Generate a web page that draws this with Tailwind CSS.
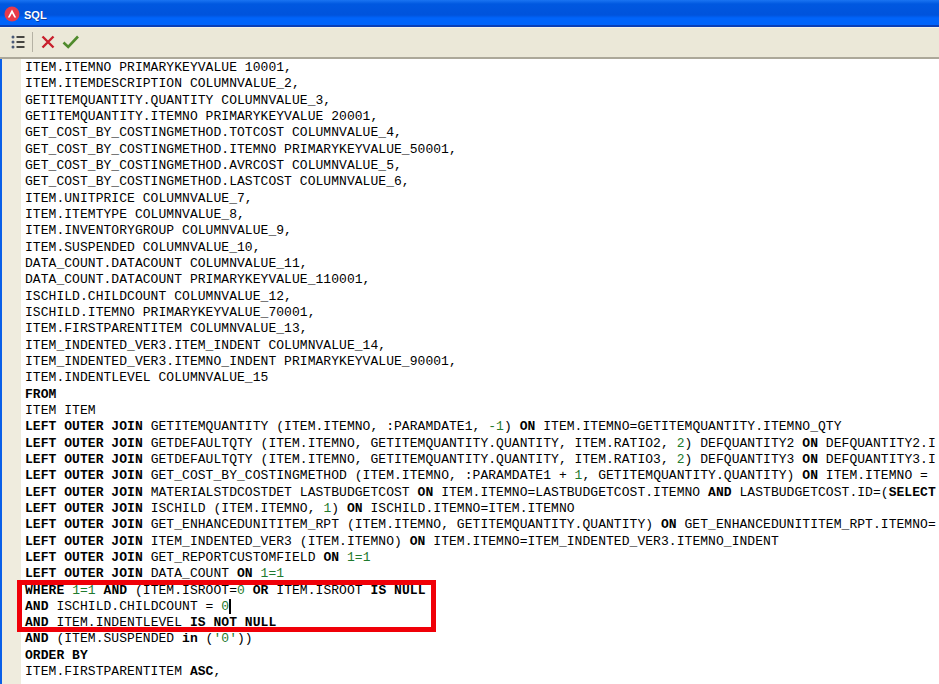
<!DOCTYPE html>
<html>
<head>
<meta charset="utf-8">
<script src="https://cdn.jsdelivr.net/npm/@tailwindcss/browser@4"></script>
</head>
<body class="bg-white">
<div class="w-[939px] h-[684px] overflow-hidden flex flex-col bg-white">
  <header class="h-[27px] shrink-0 flex items-center gap-[4px] pl-[4px] pt-[3px] border-b-2 border-[#0a3fb5] bg-[linear-gradient(180deg,#1a74f2_0px,#0058e0_4px,#0053dc_15px,#0064fa_18px,#0064fa_100%)]">
    <svg width="16" height="16" viewBox="0 0 16 16" class="shrink-0">
      <circle cx="8" cy="8" r="7.5" fill="#e83a4a"/>
      <path d="M3.8 11.6 8 3.4l4.2 8.2-1.9 0L8 7.2l-2.3 4.4z" fill="#fff"/>
    </svg>
    <span class="mt-[2px] font-['Liberation_Sans',sans-serif] font-bold text-[11px] text-white [text-shadow:1px_1px_0_#0a3a9e]">SQL</span>
  </header>
  <div class="h-[32px] shrink-0 flex items-center pl-[11px] pb-[1px] border-t border-[#f3f2ea] border-b-2 border-b-[#aca899] bg-[#ebe8d8]">
    <svg width="14" height="14" viewBox="0 0 14 14" class="shrink-0">
      <circle cx="2" cy="2" r="1.5" fill="#4a5a78"/>
      <circle cx="2" cy="7" r="1.5" fill="#4a5a78"/>
      <circle cx="2" cy="12" r="1.5" fill="#4a5a78"/>
      <path d="M5.5 2H13.5M5.5 7H13.5M5.5 12H13.5" stroke="#111" stroke-width="1.3" fill="none"/>
    </svg>
    <div class="w-px h-[20px] bg-[#b5b2a4] ml-[7px] mr-[8px]"></div>
    <svg width="14" height="14" viewBox="0 0 14 14" class="shrink-0">
      <path d="M1.5 1.5 12.5 12.5M12.5 1.5 1.5 12.5" stroke="#c8202c" stroke-width="2.4" fill="none"/>
    </svg>
    <svg width="18" height="14" viewBox="0 0 18 14" class="shrink-0 ml-[7px]">
      <path d="M1.5 7.5 6.2 12 16 1.5" stroke="#4f8a2c" stroke-width="2.6" fill="none"/>
    </svg>
  </div>
  <main class="relative flex-1 flex min-h-0 overflow-hidden">
    <div class="w-[2px] shrink-0 bg-[#0a5fe8]"></div>
    <div class="w-[19px] shrink-0 bg-[#efecde]"></div>
    <pre class="pl-[4px] pt-[1px] m-0 font-['Liberation_Mono',monospace] text-[13px] leading-[16.33px] tracking-[0.05px] text-black whitespace-pre">ITEM.ITEMNO PRIMARYKEYVALUE 10001,
ITEM.ITEMDESCRIPTION COLUMNVALUE_2,
GETITEMQUANTITY.QUANTITY COLUMNVALUE_3,
GETITEMQUANTITY.ITEMNO PRIMARYKEYVALUE 20001,
GET_COST_BY_COSTINGMETHOD.TOTCOST COLUMNVALUE_4,
GET_COST_BY_COSTINGMETHOD.ITEMNO PRIMARYKEYVALUE_50001,
GET_COST_BY_COSTINGMETHOD.AVRCOST COLUMNVALUE_5,
GET_COST_BY_COSTINGMETHOD.LASTCOST COLUMNVALUE_6,
ITEM.UNITPRICE COLUMNVALUE_7,
ITEM.ITEMTYPE COLUMNVALUE_8,
ITEM.INVENTORYGROUP COLUMNVALUE_9,
ITEM.SUSPENDED COLUMNVALUE_10,
DATA_COUNT.DATACOUNT COLUMNVALUE_11,
DATA_COUNT.DATACOUNT PRIMARYKEYVALUE_110001,
ISCHILD.CHILDCOUNT COLUMNVALUE_12,
ISCHILD.ITEMNO PRIMARYKEYVALUE_70001,
ITEM.FIRSTPARENTITEM COLUMNVALUE_13,
ITEM_INDENTED_VER3.ITEM_INDENT COLUMNVALUE_14,
ITEM_INDENTED_VER3.ITEMNO_INDENT PRIMARYKEYVALUE_90001,
ITEM.INDENTLEVEL COLUMNVALUE_15
<b>FROM</b>
ITEM ITEM
<b>LEFT OUTER JOIN</b> GETITEMQUANTITY (ITEM.ITEMNO, :PARAMDATE1, <span class="text-[#1f7a2e]">-1</span>) <b>ON</b> ITEM.ITEMNO=GETITEMQUANTITY.ITEMNO_QTY
<b>LEFT OUTER JOIN</b> GETDEFAULTQTY (ITEM.ITEMNO, GETITEMQUANTITY.QUANTITY, ITEM.RATIO2, <span class="text-[#1f7a2e]">2</span>) DEFQUANTITY2 <b>ON</b> DEFQUANTITY2.I
<b>LEFT OUTER JOIN</b> GETDEFAULTQTY (ITEM.ITEMNO, GETITEMQUANTITY.QUANTITY, ITEM.RATIO3, <span class="text-[#1f7a2e]">2</span>) DEFQUANTITY3 <b>ON</b> DEFQUANTITY3.I
<b>LEFT OUTER JOIN</b> GET_COST_BY_COSTINGMETHOD (ITEM.ITEMNO, :PARAMDATE1 + <span class="text-[#1f7a2e]">1</span>, GETITEMQUANTITY.QUANTITY) <b>ON</b> ITEM.ITEMNO =
<b>LEFT OUTER JOIN</b> MATERIALSTDCOSTDET LASTBUDGETCOST <b>ON</b> ITEM.ITEMNO=LASTBUDGETCOST.ITEMNO <b>AND</b> LASTBUDGETCOST.ID=(<b>SELECT</b>
<b>LEFT OUTER JOIN</b> ISCHILD (ITEM.ITEMNO, <span class="text-[#1f7a2e]">1</span>) <b>ON</b> ISCHILD.ITEMNO=ITEM.ITEMNO
<b>LEFT OUTER JOIN</b> GET_ENHANCEDUNITITEM_RPT (ITEM.ITEMNO, GETITEMQUANTITY.QUANTITY) <b>ON</b> GET_ENHANCEDUNITITEM_RPT.ITEMNO=
<b>LEFT OUTER JOIN</b> ITEM_INDENTED_VER3 (ITEM.ITEMNO) <b>ON</b> ITEM.ITEMNO=ITEM_INDENTED_VER3.ITEMNO_INDENT
<b>LEFT OUTER JOIN</b> GET_REPORTCUSTOMFIELD <b>ON</b> <span class="text-[#1f7a2e]">1=1</span>
<b>LEFT OUTER JOIN</b> DATA_COUNT <b>ON</b> <span class="text-[#1f7a2e]">1=1</span>
<b>WHERE</b> <span class="text-[#1f7a2e]">1=1</span> <b>AND</b> (ITEM.ISROOT=<span class="text-[#1f7a2e]">0</span> <b>OR</b> ITEM.ISROOT <b>IS NULL</b>
<b>AND</b> ISCHILD.CHILDCOUNT = <span class="text-[#1f7a2e] border-r-2 border-black -mr-[2px]">0</span>
<b>AND</b> ITEM.INDENTLEVEL <b>IS NOT NULL</b>
<b>AND</b> (ITEM.SUSPENDED <b>in</b> (<span class="text-[#1f7a2e]">'0'</span>))
<b>ORDER BY</b>
ITEM.FIRSTPARENTITEM <b>ASC</b>,</pre>
    <div class="absolute left-[17px] top-[521px] w-[419px] h-[52px] border-[5px] border-[#f00008]"></div>
  </main>
</div>
</body>
</html>
